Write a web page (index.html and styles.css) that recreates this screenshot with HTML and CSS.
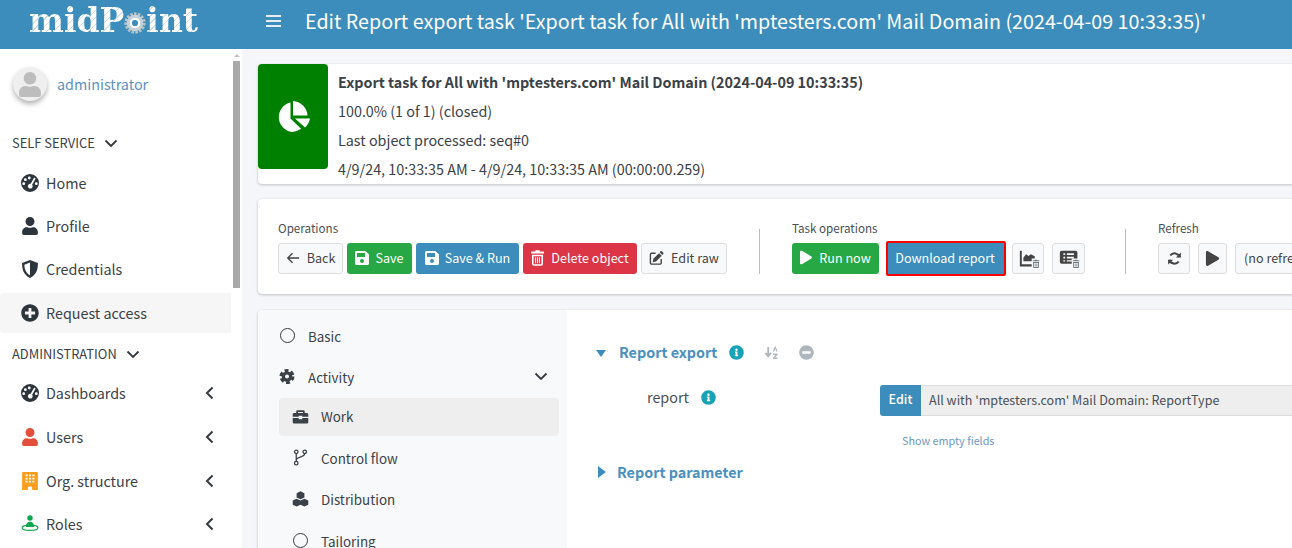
FILE: index.html
```html
<!DOCTYPE html>
<html lang="en">
<head>
<meta charset="utf-8">
<title>Edit Report export task</title>
<link rel="stylesheet" href="styles.css">
</head>
<body>
<svg class="defs" width="0" height="0" aria-hidden="true">
  <defs>
    <symbol id="i-user" viewBox="0 0 448 512"><path d="M224 256c70.7 0 128-57.3 128-128S294.7 0 224 0 96 57.3 96 128s57.3 128 128 128zm89.6 32h-16.7c-22.2 10.2-46.9 16-72.9 16s-50.6-5.8-72.9-16h-16.7C60.2 288 0 348.2 0 422.4V464c0 26.5 21.5 48 48 48h352c26.5 0 48-21.5 48-48v-41.6c0-74.2-60.2-134.4-134.4-134.4z"/></symbol>
    <symbol id="i-save" viewBox="0 0 448 512"><path d="M433.941 129.941l-83.882-83.882A48 48 0 0 0 316.118 32H48C21.49 32 0 53.49 0 80v352c0 26.51 21.49 48 48 48h352c26.51 0 48-21.49 48-48V163.882a48 48 0 0 0-14.059-33.941zM224 416c-35.346 0-64-28.654-64-64 0-35.346 28.654-64 64-64s64 28.654 64 64c0 35.346-28.654 64-64 64zm96-304.52V212c0 6.627-5.373 12-12 12H76c-6.627 0-12-5.373-12-12V108c0-6.627 5.373-12 12-12h228.52c3.183 0 6.235 1.264 8.485 3.515l3.48 3.48A11.996 11.996 0 0 1 320 111.48z"/></symbol>
    <symbol id="i-play" viewBox="0 0 448 512"><path d="M424.4 214.7L72.4 6.6C43.8-10.3 0 6.1 0 47.9V464c0 37.5 40.7 60.1 72.4 41.3l352-208c31.4-18.5 31.5-64.1 0-82.6z"/></symbol>
    <symbol id="i-plus" viewBox="0 0 512 512"><path d="M256 8C119 8 8 119 8 256s111 248 248 248 248-111 248-248S393 8 256 8zm144 276c0 6.6-5.4 12-12 12h-92v92c0 6.6-5.4 12-12 12h-56c-6.6 0-12-5.4-12-12v-92h-92c-6.6 0-12-5.4-12-12v-56c0-6.6 5.4-12 12-12h92v-92c0-6.6 5.4-12 12-12h56c6.6 0 12 5.4 12 12v92h92c6.6 0 12 5.4 12 12v56z"/></symbol>
    <symbol id="i-info" viewBox="0 0 512 512"><path d="M256 8C119.043 8 8 119.083 8 256c0 136.997 111.043 248 248 248s248-111.003 248-248C504 119.083 392.957 8 256 8zm0 110c23.196 0 42 18.804 42 42s-18.804 42-42 42-42-18.804-42-42 18.804-42 42-42zm56 254c0 6.627-5.373 12-12 12h-88c-6.627 0-12-5.373-12-12v-24c0-6.627 5.373-12 12-12h12v-64h-12c-6.627 0-12-5.373-12-12v-24c0-6.627 5.373-12 12-12h64c6.627 0 12 5.373 12 12v100h12c6.627 0 12 5.373 12 12v24z"/></symbol>
    <symbol id="i-minus" viewBox="0 0 512 512"><path d="M256 8C119 8 8 119 8 256s111 248 248 248 248-111 248-248S393 8 256 8zM124 296c-6.6 0-12-5.4-12-12v-56c0-6.6 5.4-12 12-12h264c6.6 0 12 5.4 12 12v56c0 6.6-5.4 12-12 12H124z"/></symbol>
    <symbol id="i-gauge" viewBox="0 0 24 24"><path fill-rule="evenodd" d="M12 0a12 12 0 1 0 0 24 12 12 0 0 0 0-24zM11 3.400a1.900 1.900 0 1 1 0 3.800 1.900 1.900 0 0 1 0-3.800zM5.800 5.600a1.900 1.900 0 1 1 0 3.800 1.900 1.900 0 0 1 0-3.800zM3.600 11a1.900 1.900 0 1 1 0 3.800 1.900 1.900 0 0 1 0-3.800zM20.400 11a1.900 1.900 0 1 1 0 3.800 1.900 1.900 0 0 1 0-3.800zM17.600 4.800l1.900 1.100-4.700 8.300a3.200 3.200 0 1 1-1.900-1.100z"/></symbol>
    <symbol id="i-shield" viewBox="0 0 24 24"><path fill-rule="evenodd" d="M12 0 1.500 4c-.3 8.500 2.100 16 10.500 20 8.400-4 10.800-11.500 10.500-20zM12 3.400v17C6.800 17.400 4.600 12.400 4.500 6.200z"/></symbol>
    <symbol id="i-building" viewBox="0 0 448 512"><path fill-rule="evenodd" d="M30 0h388c14 0 30 12 30 28v484H285v-84c0-8-6-14-14-14h-94c-8 0-14 6-14 14v84H0V28C0 12 16 0 30 0zM96 70v52h60V70zm98 0v52h60V70zm98 0v52h60V70zM96 160v52h60v-52zm98 0v52h60v-52zm98 0v52h60v-52zM96 250v52h60v-52zm98 0v52h60v-52zm98 0v52h60v-52z"/></symbol>
    <symbol id="i-trash" viewBox="0 0 20 24"><path fill-rule="evenodd" d="M7 0h6l1 2h5a1 1 0 0 1 1 1v2H0V3a1 1 0 0 1 1-1h5zM1.500 7h17v14a3 3 0 0 1-3 3h-11a3 3 0 0 1-3-3zM4 9.500V21a.6.6 0 0 0 .6.6h10.800a.6.6 0 0 0 .6-.6V9.500zM6.200 11h1.600v9H6.200zm3 0h1.600v9H9.200zm3 0h1.600v9h-1.600z"/></symbol>
  </defs>
</svg>

<header class="topbar">
  <a class="logo"><span>midP</span><svg class="logo-gear" viewBox="0 0 32 32"><circle cx="16" cy="16" r="12.500" fill="none" stroke="#b9c4c9" stroke-width="6" stroke-dasharray="3.400 1.800"/><circle cx="16" cy="16" r="10" fill="none" stroke="#c9d2d6" stroke-width="4"/><circle cx="16" cy="16" r="8" fill="#fff"/><circle cx="16" cy="16" r="4.500" fill="#3c8dbc"/></svg><span>int</span></a>
  <span class="burger"><i></i><i></i><i></i></span>
  <h1 class="page-title">Edit Report export task 'Export task for All with 'mptesters.com' Mail Domain (2024-04-09 10:33:35)'</h1>
</header>

<div class="shell">
  <aside class="sidebar">
    <div class="side-scroll">
      <div class="user-panel">
        <span class="avatar"><svg viewBox="0 0 448 512"><use href="#i-user"/></svg></span>
        <a class="user-name">administrator</a>
      </div>
      <div class="nav-head self">SELF SERVICE <svg class="chev-down" viewBox="0 0 14 9"><path d="M1.500 1.500 7 7l5.500-5.500"/></svg></div>
      <ul class="nav">
        <li class="nav-item"><svg class="ico"><use href="#i-gauge"/></svg>Home</li>
        <li class="nav-item"><svg class="ico"><use href="#i-user"/></svg>Profile</li>
        <li class="nav-item"><svg class="ico"><use href="#i-shield"/></svg>Credentials</li>
        <li class="nav-item on"><svg class="ico"><use href="#i-plus"/></svg>Request access</li>
      </ul>
      <div class="nav-head admin">ADMINISTRATION <svg class="chev-down" viewBox="0 0 14 9"><path d="M1.500 1.500 7 7l5.500-5.500"/></svg></div>
      <ul class="nav admin-nav">
        <li class="nav-item"><svg class="ico"><use href="#i-gauge"/></svg>Dashboards<svg class="chev-left" viewBox="0 0 9 14"><path d="M7.500 1.500 2 7l5.500 5.500"/></svg></li>
        <li class="nav-item"><svg class="ico red"><use href="#i-user"/></svg>Users<svg class="chev-left" viewBox="0 0 9 14"><path d="M7.500 1.500 2 7l5.500 5.500"/></svg></li>
        <li class="nav-item"><svg class="ico orange"><use href="#i-building"/></svg>Org. structure<svg class="chev-left" viewBox="0 0 9 14"><path d="M7.500 1.500 2 7l5.500 5.500"/></svg></li>
        <li class="nav-item"><svg class="ico green" viewBox="0 0 24 24"><circle cx="12" cy="4" r="3.600"/><path d="M6.500 16c0-4.500 2.500-7 5.500-7s5.500 2.500 5.500 7z"/><ellipse cx="12" cy="17" rx="10.500" ry="3.600" fill="none" stroke="currentColor" stroke-width="1.600"/></svg>Roles<svg class="chev-left" viewBox="0 0 9 14"><path d="M7.500 1.500 2 7l5.500 5.500"/></svg></li>
      </ul>
    </div>
    <div class="scrollbar"><span class="scroll-up"></span><span class="scroll-thumb"></span></div>
  </aside>

  <main class="content">
    <section class="card info-card">
      <div class="info-icon">
        <svg viewBox="0 0 33 31" width="33" height="31"><path d="M13.500 1.500v16l10.600 10.300A15.300 15.300 0 0 1 15 31 15 15 0 0 1 13.500 1.500z"/><path d="M16 0a15.500 15.500 0 0 1 14.500 14.500H16z"/><path d="M18 17.500h15a16 16 0 0 1-5 9z"/></svg>
      </div>
      <div class="info-text">
        <strong>Export task for All with 'mptesters.com' Mail Domain (2024-04-09 10:33:35)</strong>
        <span>100.0% (1 of 1) (closed)</span>
        <span>Last object processed: seq#0</span>
        <span>4/9/24, 10:33:35 AM - 4/9/24, 10:33:35 AM (00:00:00.259)</span>
      </div>
    </section>

    <section class="card toolbar-card">
      <div class="group">
        <div class="group-label">Operations</div>
        <div class="btns">
          <button class="btn light back"><svg class="b-ico" viewBox="0 0 16 16"><path class="stroke" d="M15 8H2.500M7.500 2.500 2 8l5.500 5.500"/></svg>Back</button>
          <button class="btn green save"><svg class="b-ico"><use href="#i-save"/></svg>Save</button>
          <button class="btn blue saverun"><svg class="b-ico"><use href="#i-save"/></svg>Save &amp; Run</button>
          <button class="btn red delete"><svg class="b-ico trash"><use href="#i-trash"/></svg>Delete object</button>
          <button class="btn light editraw"><svg class="b-ico" viewBox="0 0 16 16"><path class="stroke" d="M13 9v4.200a1.300 1.300 0 0 1-1.300 1.300H2.800a1.300 1.300 0 0 1-1.300-1.300V4.300A1.300 1.300 0 0 1 2.800 3H7"/><path d="M12.300.8a1 1 0 0 1 1.400 0l1.500 1.500a1 1 0 0 1 0 1.400l-1 1-2.900-2.900zM10.700 2.800l2.900 2.900L7.500 11.800l-3.500.6.600-3.500z"/></svg>Edit raw</button>
        </div>
      </div>
      <span class="divider first"></span>
      <div class="group">
        <div class="group-label">Task operations</div>
        <div class="btns">
          <button class="btn green runnow"><svg class="b-ico"><use href="#i-play"/></svg>Run now</button>
          <button class="btn blue download">Download report</button>
          <button class="btn light sq chartbtn"><svg viewBox="0 0 24 24" class="sq-ico"><path d="M1 3h2.200v15.500H19V21H1z"/><path d="M5 15v-4l3-4 3 2 2.500-2 4.500 2.500V15z"/><path class="clip-bg" d="M14.500 12h9.500v12h-9.500z"/><use class="clip" href="#i-trash" x="15.500" y="13" width="8" height="10"/></svg></button>
          <button class="btn light sq listbtn"><svg viewBox="0 0 24 24" class="sq-ico"><path fill-rule="evenodd" d="M3 3h16a2 2 0 0 1 2 2v11a2 2 0 0 1-2 2H3a2 2 0 0 1-2-2V5a2 2 0 0 1 2-2zm2 3v2h2V6zm4 0v2h8V6zM5 10v2h2v-2zm4 0v2h8v-2zM5 14v1.500h2V14zm4 0v1.500h8V14z"/><path class="clip-bg" d="M14.500 12h9.500v12h-9.500z"/><use class="clip" href="#i-trash" x="15.500" y="13" width="8" height="10"/></svg></button>
        </div>
      </div>
      <span class="divider second"></span>
      <div class="group">
        <div class="group-label">Refresh</div>
        <div class="btns">
          <button class="btn light sq refresh"><svg viewBox="0 0 16 16" class="sq-ico small"><path class="stroke thick" d="M13.500 6.500A5.700 5.700 0 0 0 3.500 4.800M2.500 9.500a5.700 5.700 0 0 0 10 1.700"/><path d="M14.800 1.500v5.300H9.500zM1.200 14.500V9.200h5.300z"/></svg></button>
          <button class="btn light sq play"><svg class="sq-ico small"><use href="#i-play"/></svg></button>
          <button class="btn light norefresh">(no refresh)</button>
        </div>
      </div>
    </section>

    <section class="card panel-card">
      <nav class="tabs">
        <div class="tab"><span class="tab-ico"><span class="ring"></span></span>Basic</div>
        <div class="tab"><span class="tab-ico"><svg class="gear" viewBox="0 0 24 24"><circle cx="12" cy="12" r="8.500" fill="none" stroke="currentColor" stroke-width="5.500" stroke-dasharray="5.500 3.400"/><path fill-rule="evenodd" d="M12 4a8 8 0 1 0 0 16 8 8 0 0 0 0-16zm0 5a3 3 0 1 1 0 6 3 3 0 0 1 0-6z"/></svg></span>Activity<svg class="chev-down tab-chev" viewBox="0 0 14 9"><path d="M1.500 1.500 7 7l5.500-5.500"/></svg></div>
        <div class="subtab on"><span class="tab-ico"><svg viewBox="0 0 24 24" class="sub-svg"><path fill-rule="evenodd" d="M8 3h8a2 2 0 0 1 2 2v2h3a2 2 0 0 1 2 2v3.500H14.500V11h-5v1.500H1V9a2 2 0 0 1 2-2h3V5a2 2 0 0 1 2-2zm.5 2.500V7h7V5.500zM1 14h8.500v2h5v-2H23v6a2 2 0 0 1-2 2H3a2 2 0 0 1-2-2z"/></svg></span>Work</div>
        <div class="subtab"><span class="tab-ico"><svg viewBox="0 0 24 24" class="sub-svg branch"><circle cx="6" cy="4" r="2.500"/><circle cx="6" cy="20" r="2.500"/><circle cx="18" cy="4" r="2.500"/><path d="M6 6.500v11M18 6.500c0 6-12 4-12 9"/></svg></span>Control flow</div>
        <div class="subtab"><span class="tab-ico"><svg viewBox="0 0 24 24" class="sub-svg cubes"><path d="M12 .5 17.500 3v6L12 11.500 6.500 9V3zM6.500 11 12 13.500v6L6.500 22 1 19.500v-6zM17.500 11l5.500 2.500v6L17.500 22 12 19.500v-6z"/></svg></span>Distribution</div>
        <div class="subtab"><span class="tab-ico"><span class="ring"></span></span>Tailoring</div>
      </nav>
      <div class="form">
        <div class="section-head first-head">
          <span class="tri-down"></span><span class="section-title export-title">Report export</span>
          <svg class="mini info"><use href="#i-info"/></svg>
          <svg class="sort" viewBox="0 0 16 16"><path d="M4.500 2v9M1.500 8.500l3 3.500 3-3.500" fill="none" stroke="currentColor" stroke-width="2"/><path d="M9.500 7l2-5.500h1L14.500 7h-1.500l-1-3-1 3zM9.800 9h4.700v1.400l-2.700 3h2.700V15H9.500v-1.400l2.700-3H9.800z"/></svg>
          <svg class="mini minus"><use href="#i-minus"/></svg>
        </div>
        <div class="field">
          <div class="field-label">report<svg class="mini info"><use href="#i-info"/></svg></div>
          <div class="input-group"><span class="input-btn">Edit</span><span class="input-val">All with 'mptesters.com' Mail Domain: ReportType</span></div>
        </div>
        <a class="empty-link">Show empty fields</a>
        <div class="section-head second-head">
          <span class="tri-right"></span><span class="section-title">Report parameter</span>
        </div>
      </div>
    </section>
  </main>
</div>
</body>
</html>
```

FILE: styles.css
```css
* { box-sizing: border-box; }
html, body { margin: 0; height: 100%; overflow: hidden; }
body {
  font-family: "Noto Sans CJK SC", "Noto Sans", sans-serif;
  font-size: 14.35px;
  line-height: 24px;
  color: #3b4148;
  background: #f4f6f9;
}
.defs { position: absolute; }
ul { list-style: none; margin: 0; padding: 0; }
svg { fill: currentColor; }

/* top bar */
.topbar {
  height: 49px;
  background: #3c8dbc;
  color: #fff;
  display: flex;
  align-items: center;
  padding: 0 0 7px 29px;
  white-space: nowrap;
  overflow: hidden;
}
.logo {
  font-family: "DejaVu Serif", serif;
  font-weight: 700;
  font-size: 33px;
  line-height: 42px;
  width: 169px;
  flex: none;
  display: flex;
  align-items: center;
}
.logo span {
  background: repeating-linear-gradient(135deg, #fff 0 4px, #cfe0ea 4px 5px);
  -webkit-background-clip: text;
  background-clip: text;
  color: transparent;
}
.logo-gear { width: 22px; height: 22px; margin: 4px 0 0; flex: none; }
.burger {
  margin-left: 68px;
  width: 15px;
  display: flex;
  flex-direction: column;
  gap: 3px;
  flex: none;
}
.burger i { display: block; height: 2px; background: #e5eef4; }
.page-title {
  margin: 0 0 0 24px;
  font-size: 19.7px;
  font-weight: 400;
  line-height: 42px;
}

/* shell */
.shell { display: flex; height: 499px; }
.sidebar {
  width: 242px;
  flex: none;
  background: #fff;
  display: flex;
  overflow: hidden;
}
.side-scroll { width: 231px; flex: none; }
.scrollbar {
  width: 11px;
  flex: none;
  padding: 5px 2px 0 2px;
  display: flex;
  flex-direction: column;
  align-items: center;
}
.scroll-up {
  width: 0; height: 0;
  border-left: 3px solid transparent;
  border-right: 3px solid transparent;
  border-bottom: 3px solid #c0c0c0;
  margin-bottom: 4px;
}
.scroll-thumb { width: 7px; height: 227px; background: #a9a9a9; }

.user-panel { height: 70px; display: flex; align-items: center; padding-left: 13px; }
.avatar {
  width: 34px; height: 34px;
  border-radius: 50%;
  background: #efefef;
  box-shadow: 0 3px 5px rgba(0,0,0,.3);
  display: flex;
  align-items: center;
  justify-content: center;
  color: #bdbdbd;
}
.avatar svg { width: 24px; height: 25px; }
.user-name { margin-left: 10px; color: #5c91c2; }

.nav-head {
  display: flex;
  align-items: center;
  font-size: 12.9px;
  line-height: 20px;
  padding-left: 12px;
}
.nav-head.self { height: 45px; padding-top: 3px; margin-bottom: -1px; }
.nav-head.admin { height: 41px; padding-top: 2px; }
.chev-down { width: 14px; height: 9px; margin-left: 9px; fill: none; stroke: #343a40; stroke-width: 1.800; }
.nav { display: flex; flex-direction: column; gap: 3.33px; }
.admin-nav { gap: 3.55px; }
.nav-item {
  height: 40px;
  display: flex;
  align-items: center;
  padding-left: 21px;
  padding-bottom: 1px;
  border-radius: 4px 0 0 4px;
}
.nav-item.on { background: #f6f6f6; padding-bottom: 0; }
.ico { width: 18px; height: 18px; margin-right: 7px; flex: none; color: #2c343c; }
.ico.red { color: #e2503b; }
.ico.orange { color: #fa9e1b; }
.ico.green { color: #0ea551; }
.chev-left { width: 9px; height: 14px; margin-left: auto; margin-right: 17px; fill: none; stroke: #343a40; stroke-width: 2; }

/* content */
.content { flex: 1; min-width: 0; padding: 15px 0 0 16px; overflow: hidden; }
.card {
  width: 1200px;
  background: #fff;
  border-radius: 4px;
  box-shadow: 0 0 1px rgba(0,0,0,.13), 0 1px 3px rgba(0,0,0,.2);
}

.info-card { height: 120px; display: flex; align-items: flex-start; margin-bottom: 15px; }
.info-icon {
  width: 70px; height: 105px;
  background: #008000;
  border-radius: 4px;
  display: flex;
  align-items: center;
  justify-content: center;
  color: #fff;
  flex: none;
}
.info-text { display: flex; flex-direction: column; padding: 6px 0 0 10px; white-space: nowrap; gap: 4.9px; }
.info-text strong, .info-text span { line-height: 24px; font-size: 14.35px; }
.info-text strong { font-weight: 700; }

.toolbar-card { height: 95px; display: flex; align-items: flex-start; padding: 20px 0 0 20px; margin-bottom: 16px; }
.group-label { font-size: 11.65px; line-height: 18px; margin-bottom: 6px; color: #495057; white-space: nowrap; }
.btns { display: flex; gap: 4px; align-items: center; height: 31px; }
.btn {
  font: inherit;
  font-size: 12.6px;
  height: 31px;
  line-height: 20px;
  padding: 0 0 2px;
  border: 1px solid transparent;
  border-radius: 3px;
  display: inline-flex;
  align-items: center;
  justify-content: center;
  white-space: nowrap;
  flex: none;
}
.btn.light { background: #f8f9fa; border-color: #ddd; color: #444; }
.btn.green { background: #28a745; color: #fff; }
.btn.blue { background: #3c8dbc; color: #fff; }
.btn.red { background: #dc3545; color: #fff; }
.b-ico { width: 14px; height: 16px; margin-right: 6px; flex: none; }
.stroke { fill: none; stroke: currentColor; stroke-width: 1.500; }
.stroke.thick { stroke-width: 2.200; }
.back { width: 65px; }
.save { width: 65px; }
.saverun { width: 103px; }
.delete { width: 114px; }
.editraw { width: 86px; }
.back .b-ico { margin-right: 7px; }
.b-ico.trash { width: 13px; margin-right: 7px; }
.editraw .b-ico { width: 15px; margin-right: 7px; }
.divider { width: 1px; height: 45px; background: #b6bdc4; margin-top: 10px; flex: none; }
.divider.first { margin-left: 32px; margin-right: 32px; }
.divider.second { margin-left: 40px; margin-right: 32px; }
.runnow { width: 87px; margin-right: 3px; }
.runnow .b-ico { width: 12px; height: 15px; margin-right: 7px; }
.download {
  width: 120px;
  height: 35px;
  margin-right: 2px;
  padding-right: 2px;
  border: 2px solid #f00;
  border-radius: 2px;
}
.sq { width: 32px; padding: 0; }
.listbtn { width: 33px; margin-left: 4px; }
.refresh { margin-right: 4px; }
.play { width: 29px; margin-right: 4px; }
.sq-ico { width: 21px; height: 21px; margin-left: 2px; }
.sq-ico.small { width: 15px; height: 15px; margin-left: 0; }
.clip-bg { fill: #f8f9fa; }
.clip { fill: #6f7c82; color: #6f7c82; }
.norefresh { width: 120px; justify-content: flex-start; padding-left: 8px; }

/* bottom panel */
.panel-card { height: 300px; display: flex; overflow: hidden; }
.tabs { width: 309px; flex: none; background: #f8f9fa; padding: 6px 8px 0 21px; }
.tab { height: 40px; margin-bottom: 1px; padding-bottom: 1px; display: flex; align-items: center; font-size: 13.4px; white-space: nowrap; }
.tab-ico { width: 16px; height: 18px; display: flex; align-items: center; justify-content: center; margin-right: 13px; flex: none; }
.ring { width: 15px; height: 15px; border: 1.500px solid #343a40; border-radius: 50%; display: block; flex: none; }
.gear { width: 16px; height: 17px; }
.tab-chev { margin-left: auto; margin-right: 11px; }
.subtab {
  height: 38px;
  margin-bottom: 3.500px;
  padding-left: 13px;
  padding-bottom: 2px;
  display: flex;
  align-items: center;
  font-size: 13.4px;
  border-radius: 4px;
  white-space: nowrap;
}
.subtab .tab-ico { margin-right: 13px; }
.subtab.on { background: #eee; }
.sub-svg { width: 17px; height: 17px; flex: none; }
.branch { fill: none; stroke: currentColor; stroke-width: 1.800; }

.form { flex: 1; padding: 0 0 0 28px; }
.section-head { display: flex; align-items: center; height: 24px; }
.first-head { margin-top: 30px; }
.second-head { margin-top: 10px; }
.tri-down {
  width: 0; height: 0;
  border-left: 5.500px solid transparent;
  border-right: 5.500px solid transparent;
  border-top: 7px solid #3c8dbc;
  margin: 2px 13px 0 1px;
}
.tri-right {
  width: 0; height: 0;
  border-top: 6px solid transparent;
  border-bottom: 6px solid transparent;
  border-left: 8px solid #3c8dbc;
  margin: 0 11px 0 3px;
}
.section-title { color: #4a90bf; font-weight: 700; font-size: 14.35px; white-space: nowrap; }
.export-title { width: 110px; }
.mini { width: 15px; height: 15px; flex: none; }
.mini.info { color: #17a2b8; }
.mini.minus { color: #adb5bd; }
.sort { width: 15px; height: 15px; margin: 0 20px 0 20px; color: #b0b7bd; }
.field { display: flex; align-items: flex-start; margin-top: 21px; height: 31px; }
.field-label { width: 285px; padding: 0 0 0 52px; display: flex; align-items: center; height: 24px; font-size: 14.35px; color: #495057; white-space: nowrap; }
.field-label .mini { margin-left: 12px; }
.input-group { display: flex; height: 31px; width: 700px; flex: none; font-size: 12.55px; line-height: 28px; border-radius: 3px; overflow: hidden; }
.input-btn { width: 41px; background: #3c8dbc; color: #fff; text-align: center; font-weight: 500; flex: none; }
.input-val { flex: 1; background: #eee; padding-left: 8px; border: 1px solid #ddd; border-left: 0; color: #495057; white-space: nowrap; }
.empty-link { display: block; margin: 14px 0 0 307px; font-size: 10.8px; line-height: 20px; color: #6d98bf; white-space: nowrap; }
```
